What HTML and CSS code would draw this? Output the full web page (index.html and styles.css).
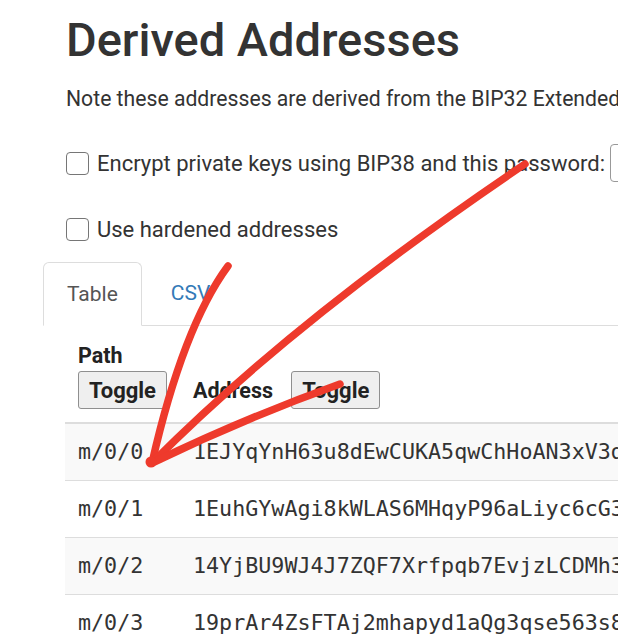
FILE: index.html
```html
<!DOCTYPE html>
<html lang="en">
    <head>
        <meta charset="utf-8">
        <title>Derived Addresses</title>
        <link rel="stylesheet" href="styles.css">
    </head>
    <body>
        <div class="page">
            <div class="section">
                <h2>Derived Addresses</h2>
                <p class="note">Note these addresses are derived from the BIP32 Extended Key</p>
                <label class="check">
                    <span class="box"></span>
                    Encrypt private keys using BIP38 and this password:
                    <span class="pass"></span>
                </label>
                <label class="check hardened">
                    <span class="box"></span>
                    Use hardened addresses
                </label>
            </div>

            <ul class="tabs">
                <li class="tab active">Table</li>
                <li class="tab"><a href="#">CSV</a></li>
            </ul>

            <table class="addresses">
                <thead>
                    <tr>
                        <th class="col-path">Path<br><button>Toggle</button></th>
                        <th>Address <button>Toggle</button></th>
                    </tr>
                </thead>
                <tbody>
                    <tr><td>m/0/0</td><td>1EJYqYnH63u8dEwCUKA5qwChHoAN3xV3dT</td></tr>
                    <tr><td>m/0/1</td><td>1EuhGYwAgi8kWLAS6MHqyP96aLiyc6cG3s</td></tr>
                    <tr><td>m/0/2</td><td>14YjBU9WJ4J7ZQF7Xrfpqb7EvjzLCDMh3k</td></tr>
                    <tr><td>m/0/3</td><td>19prAr4ZsFTAj2mhapyd1aQg3qse563s8v</td></tr>
                </tbody>
            </table>
        </div>

        <!-- hand drawn arrow on top of the screenshot -->
        <svg class="scribble" width="618" height="640" viewBox="0 0 618 640">
            <g fill="none" stroke="#ee3a2c" stroke-width="7.5" stroke-linecap="round">
                <path d="M228 266 Q183 327 152 463"/>
                <path d="M525 164 Q294 320 152 463"/>
                <path d="M340 384 Q245 418 152 463"/>
            </g>
            <circle cx="151" cy="462" r="5.5" fill="#ee3a2c"/>
        </svg>
    </body>
</html>
```

FILE: styles.css
```css
body {
    margin: 0;
    font-family: Roboto, "Liberation Sans", sans-serif;
    color: #333;
    background-color: #ffffff;
    overflow: hidden;
    width: 618px;
    height: 640px;
    position: relative;
}

.page {
    padding-left: 43px;
    white-space: nowrap;
}

.section {
    padding-left: 23px;
}

h2 {
    margin: 12px 0 0;
    font-size: 47px;
    font-weight: 500;
    line-height: 56px;
    color: #333;
}

.note {
    margin: 16px 0 0;
    font-size: 21.2px;
    line-height: 30px;
}

.check {
    display: flex;
    align-items: center;
    gap: 8px;
    margin-top: 29px;
    height: 40px;
    font-size: 22px;
    color: #333;
}

.check.hardened {
    margin-top: 26px;
}

.box {
    width: 21px;
    height: 21px;
    border: 1px solid #767676;
    border-radius: 4px;
    flex: none;
}

.pass {
    width: 60px;
    height: 36px;
    border: 1px solid #999;
    border-radius: 4px;
    flex: none;
    margin-left: -3px;
}

.tabs {
    list-style: none;
    margin: 13px 0 0;
    padding: 0;
    display: flex;
    border-bottom: 1px solid #ddd;
    font-size: 21px;
}

.tab {
    height: 62px;
    line-height: 62px;
    padding: 0 29px;
}

.tab.active {
    padding: 0 23px;
    color: #555;
    border: 1px solid #ddd;
    border-bottom-color: #ffffff;
    border-radius: 6px 6px 0 0;
    margin-bottom: -1px;
}

.tab a {
    color: #337ab7;
    text-decoration: none;
}

.addresses {
    margin-left: 22px;
    margin-top: 17px;
    border-collapse: collapse;
}

.addresses th {
    text-align: left;
    vertical-align: bottom;
    font-size: 21.5px;
    font-weight: bold;
    color: #222;
    padding: 0 13px 13px;
    line-height: 26px;
    border-bottom: 2px solid #ddd;
}

.addresses th.col-path {
    width: 102px;
}

.addresses button {
    font-family: Roboto, "Liberation Sans", sans-serif;
    font-size: 22px;
    font-weight: bold;
    color: #222;
    background-color: #efefef;
    border: 1px solid #8f8f8f;
    border-radius: 3px;
    width: 89px;
    height: 38px;
    padding: 0;
    margin-top: 2px;
}

.addresses th:last-child button {
    margin-left: 13px;
}

.addresses td {
    font-family: "DejaVu Sans Mono", "Liberation Mono", monospace;
    font-size: 21.7px;
    color: #333;
    padding: 13px;
    line-height: 30px;
    border-top: 1px solid #ddd;
}

.addresses tbody tr:first-child td {
    border-top: none;
}

.addresses tbody tr:nth-child(odd) {
    background-color: #f9f9f9;
}

.scribble {
    position: absolute;
    top: 0;
    left: 0;
    pointer-events: none;
}
```
